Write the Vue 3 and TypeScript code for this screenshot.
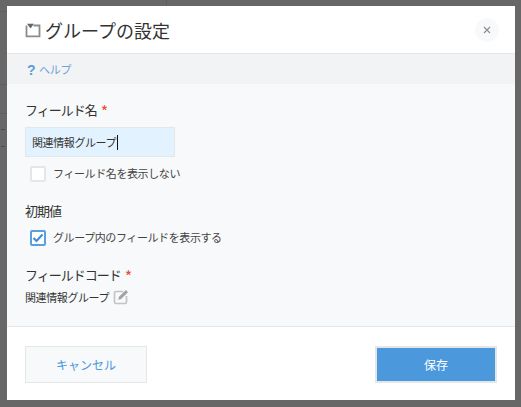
<script setup lang="ts">
import { ref } from "vue";

const fieldName = ref("関連情報グループ");
const hideLabel = ref(false);
const openGroup = ref(true);
</script>

<template>
  <div class="backdrop">
    <div class="dialog">
      <header class="dialog-header">
        <svg class="title-icon" width="16" height="15" viewBox="0 0 16 15">
          <path d="M8.500 2.500h6v10.800H1.500V2.500" fill="none" stroke="#8c8c8c" stroke-width="1.800" />
          <path d="M2 0.800h7L5.500 5.500z" fill="#666" />
        </svg>
        <h1 class="title">グループの設定</h1>
        <button class="close-btn" aria-label="閉じる">
          <svg width="8" height="8" viewBox="0 0 8 8">
            <path d="M1 1l6 6M7 1l-6 6" stroke="#8f8f8f" stroke-width="1.200" />
          </svg>
        </button>
      </header>

      <div class="help-bar">
        <span class="help-mark">?</span>
        <a class="help-link">ヘルプ</a>
      </div>

      <main class="dialog-body">
        <div class="label">フィールド名<span class="required">*</span></div>
        <div class="input-box">
          <span>{{ fieldName }}</span><span class="caret"></span>
        </div>
        <label class="check-row first-check">
          <span class="check" :class="{ checked: hideLabel }"></span>
          <span>フィールド名を表示しない</span>
        </label>

        <div class="label section">初期値</div>
        <label class="check-row second-check">
          <span class="check" :class="{ checked: openGroup }">
            <svg v-if="openGroup" width="12" height="10" viewBox="0 0 12 10">
              <path d="M1.500 5l3 3 6-6.500" fill="none" stroke="#3f8ed8" stroke-width="2.200" />
            </svg>
          </span>
          <span>グループ内のフィールドを表示する</span>
        </label>

        <div class="label section-code">フィールドコード<span class="required">*</span></div>
        <div class="code-row">
          <span>{{ fieldName }}</span>
          <svg class="edit-icon" width="16" height="16" viewBox="0 0 16 16">
            <path d="M10 2.500H3a1.500 1.500 0 0 0-1.500 1.500v9a1.500 1.500 0 0 0 1.500 1.500h9a1.500 1.500 0 0 0 1.500-1.500V7" fill="none" stroke="#c4c4c4" stroke-width="1.700" />
            <path d="M12.800 1l2.200 2.200-6.800 6.800-3 0.800 0.800-3z" fill="#a3a3a3" />
          </svg>
        </div>
      </main>

      <footer class="dialog-footer">
        <button class="btn cancel">キャンセル</button>
        <button class="btn save">保存</button>
      </footer>
    </div>
  </div>
</template>

<style>
html,
body {
  margin: 0;
  background: #666766;
}
</style>

<style scoped>
.backdrop {
  width: 521px;
  height: 407px;
  box-sizing: border-box;
  padding: 6px 6px 7px 7px;
  background-color: #666766;
  /* faint page lines showing through the overlay */
  background-image:
    linear-gradient(#5d5e5d, #5d5e5d),
    linear-gradient(#5d5e5d, #5d5e5d),
    linear-gradient(#5d5e5d, #5d5e5d),
    linear-gradient(#4a4a4a, #4a4a4a),
    linear-gradient(#4a4a4a, #4a4a4a),
    linear-gradient(#5d5e5d, #5d5e5d);
  background-size: 7px 1px, 7px 1px, 7px 1px, 4px 1px, 4px 1px, 1px 6px;
  background-position: 0 11px, 0 84px, 0 113px, 1px 129px, 1px 146px, 166px 0;
  background-repeat: no-repeat;
  font-family: "Noto Sans CJK JP", "Liberation Sans", sans-serif;
  color: #333;
}

.dialog {
  height: 100%;
  display: flex;
  flex-direction: column;
  background: #fff;
}

.dialog-header {
  height: 48px;
  box-sizing: border-box;
  display: flex;
  align-items: center;
  padding: 0 16px 0 18px;
  border-bottom: 1px solid #e3e7e8;
}

.title-icon {
  margin-right: 4px;
  margin-top: 1px;
}

.title {
  flex: 1;
  margin: 0;
  font-size: 18px;
  font-weight: 400;
  line-height: 24px;
  color: #333;
}

.close-btn {
  width: 24px;
  height: 24px;
  padding: 0;
  border: none;
  border-radius: 50%;
  background: #f7f9fa;
  display: flex;
  align-items: center;
  justify-content: center;
}

.help-bar {
  height: 30px;
  box-sizing: border-box;
  display: flex;
  align-items: center;
  padding-left: 20px;
  background: #f2f3f5;
  font-size: 11px;
  letter-spacing: -0.3px;
  color: #6d9fd8;
}

.help-mark {
  width: 12px;
  font-family: "Liberation Sans", sans-serif;
  font-size: 14px;
  font-weight: 700;
  color: #5a9cd8;
  margin-top: 1px;
}

.help-link {
  margin-top: -1px;
}

.dialog-body {
  flex: 1;
  box-sizing: border-box;
  padding: 16px 18px 0;
  background: #f7f9fa;
  border-bottom: 1px solid #e3e7e8;
  font-size: 11px;
  letter-spacing: -0.4px;
}

.label {
  font-size: 13px;
  letter-spacing: -1px;
  line-height: 20px;
  color: #333;
}

.required {
  margin-left: 4px;
  font-size: 16px;
  line-height: 16px;
  vertical-align: -3px;
  color: #e74c3c;
}

.input-box {
  width: 150px;
  height: 30px;
  box-sizing: border-box;
  margin-top: 7px;
  padding: 0 6px;
  display: flex;
  align-items: center;
  background: #e2f2fe;
  border: 1px solid #e3e7e8;
  color: #333;
}

.caret {
  width: 1px;
  height: 15px;
  background: #111;
  margin-left: 1px;
}

.check-row {
  display: flex;
  align-items: center;
  gap: 7px;
  margin-left: 5px;
  color: #444;
  line-height: 17px;
}

.first-check {
  margin-top: 8px;
}

.second-check {
  margin-top: 8px;
}

.check {
  width: 16px;
  height: 16px;
  box-sizing: border-box;
  display: flex;
  align-items: center;
  justify-content: center;
  background: #fff;
  border: 2px solid #e3e7e8;
  border-radius: 2px;
}

.check.checked {
  border-color: #5a9fe0;
}

.section {
  margin-top: 19px;
}

.section-code {
  margin-top: 19px;
}

.code-row {
  display: flex;
  align-items: center;
  gap: 4px;
  margin-top: 3px;
  line-height: 18px;
  color: #333;
}

.dialog-footer {
  height: 73px;
  box-sizing: border-box;
  display: flex;
  justify-content: space-between;
  padding: 19px 18px 0;
}

.btn {
  width: 122px;
  height: 37px;
  font-family: inherit;
  font-size: 12px;
  border: 1px solid #e3e7e8;
}

.cancel {
  background: #f7f9fa;
  color: #4a98dc;
}

.save {
  background: #4b98dc;
  border-width: 2px;
  color: #fff;
}
</style>
